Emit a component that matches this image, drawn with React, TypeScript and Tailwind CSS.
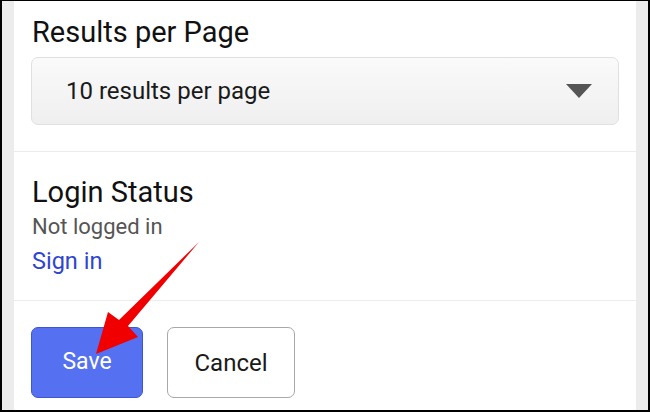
export default function App() {
  return (
    <div
      className="w-[650px] h-[412px] bg-black pt-px pl-[2px] pr-[2px] pb-[2px] overflow-hidden"
      style={{ fontFamily: "Roboto, 'Noto Sans', sans-serif" }}
    >
      <div className="relative flex h-full">
        <div className="w-[12px] shrink-0 bg-[#ececec]" />
        <div className="flex-1 bg-white flex flex-col">
          <div className="px-[17px] pt-[14px] pb-[26px] border-b border-[#ececec]">
            <div className="pl-px text-[29px] leading-[34px] text-[#111]">Results per Page</div>
            <div className="mt-[8px] h-[68px] rounded-[7px] border border-[#e0e0e0] bg-gradient-to-b from-[#fafafa] to-[#efefef] flex items-center justify-between pl-[34px] pr-[26px]">
              <span className="text-[24px] leading-[28px] text-[#1a1a1a]">10 results per page</span>
              <svg width="26" height="14" viewBox="0 0 26 14">
                <polygon points="0,0 26,0 13,14" fill="#555" />
              </svg>
            </div>
          </div>
          <div className="px-[18px] pt-[24px] pb-[25px] border-b border-[#ececec]">
            <div className="text-[29px] leading-[32px] text-[#111]">Login Status</div>
            <div className="mt-[7px] text-[22px] leading-[24px] text-[#555]">Not logged in</div>
            <div className="mt-[8px] text-[23.5px] leading-[28px] text-[#2f45d0]">Sign in</div>
          </div>
          <div className="px-[17px] pt-[26px] flex gap-[24px]">
            <button className="w-[112px] h-[71px] rounded-[7px] bg-[#5571f2] border border-[#3d55cf] text-white text-[23px]">
              Save
            </button>
            <button className="w-[128px] h-[71px] rounded-[7px] bg-white border border-[#a8a8a8] text-[#1a1a1a] text-[24px]">
              Cancel
            </button>
          </div>
        </div>
        <div className="w-[12px] shrink-0 bg-[#ececec]" />
        <svg
          className="absolute left-[-2px] top-[-1px] pointer-events-none"
          width="650"
          height="412"
          viewBox="0 0 650 412"
        >
          <polygon
            points="199,242 128,326 138,337 96,354 108,312 119,320"
            fill="#f00000"
          />
        </svg>
      </div>
    </div>
  );
}
